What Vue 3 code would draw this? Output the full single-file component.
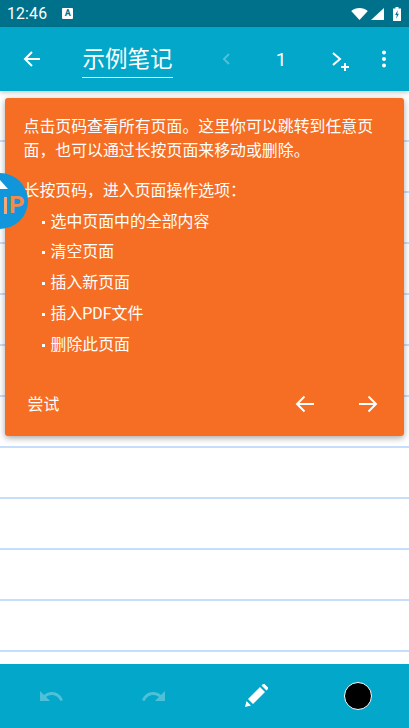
<script setup>
const steps = ["选中页面中的全部内容", "清空页面", "插入新页面", "插入PDF文件", "删除此页面"];
</script>

<template>
  <div class="screen">
    <div class="status">
      <span class="time">12:46</span>
      <span class="a-badge">A</span>
      <span class="spacer"></span>
      <svg class="wifi" width="17" height="12" viewBox="0 0 18 13"><path d="M0 3.200C2.500 1.100 5.500 0 9 0s6.500 1.100 9 3.200L9 13z" fill="#fff" /></svg>
      <svg class="signal" width="13" height="12" viewBox="0 0 13 12"><path d="M13 0v12H0z" fill="#fff" /></svg>
      <svg class="battery" width="8" height="14" viewBox="0 0 8 14"><path d="M2.500 0h3v1.500H8V14H0V1.500h2.500z" fill="#fff" /><path d="M4.700 3 2.200 8h1.600L3.200 12l2.600-5.200H4.200z" fill="#00718a" /></svg>
    </div>

    <div class="toolbar">
      <button class="icon-btn back">
        <svg width="20" height="20" viewBox="0 0 20 20"><path d="M18 10H3M10 3l-7 7 7 7" fill="none" stroke="#fff" stroke-width="2" /></svg>
      </button>
      <div class="title">示例笔记</div>
      <svg class="prev" width="10" height="14" viewBox="0 0 10 14"><path d="M8 2 3 7l5 5" fill="none" stroke="#fff" stroke-opacity=".3" stroke-width="2" /></svg>
      <span class="page-no">1</span>
      <svg class="next" width="20" height="22" viewBox="0 0 20 22"><path d="m1 2 7 6-7 6" fill="none" stroke="#fff" stroke-width="2" /><path d="M13 12v8M9 16h8" fill="none" stroke="#fff" stroke-width="2" /></svg>
      <svg class="more" width="6" height="18" viewBox="0 0 6 18"><circle cx="3" cy="2.500" r="2" fill="#fff" /><circle cx="3" cy="9" r="2" fill="#fff" /><circle cx="3" cy="15.500" r="2" fill="#fff" /></svg>
    </div>

    <div class="paper">
      <div class="card">
        <p class="intro">点击页码查看所有页面。这里你可以跳转到任意页面，也可以通过长按页面来移动或删除。</p>
        <p class="lead">长按页码，进入页面操作选项：</p>
        <ul class="steps">
          <li v-for="step in steps" :key="step">{{ step }}</li>
        </ul>
        <div class="card-foot">
          <span class="try">尝试</span>
          <span class="spacer"></span>
          <svg width="20" height="18" viewBox="0 0 20 18"><path d="M19 9H2M9.500 1.500 2 9l7.500 7.500" fill="none" stroke="#fff" stroke-width="2" /></svg>
          <svg class="fwd" width="20" height="18" viewBox="0 0 20 18"><path d="M1 9h17M10.500 1.500 18 9l-7.500 7.500" fill="none" stroke="#fff" stroke-width="2" /></svg>
        </div>
      </div>
      <div class="bubble">
        <svg class="roof" width="8" height="9" viewBox="0 0 8 9"><path d="M0 0 8 9H0z" fill="#fff" /></svg>
        <span class="o-stub"></span>
        <span class="bubble-text">P</span>
      </div>
    </div>

    <div class="bottom">
      <svg width="23" height="12" viewBox="2 7 20.500 9"><path d="M12.500 8c-2.650 0-5.050.99-6.900 2.600L2 7v9h9l-3.620-3.620c1.390-1.160 3.160-1.880 5.120-1.880 3.540 0 6.550 2.310 7.600 5.500l2.370-.78C21.080 11.030 17.150 8 12.500 8z" fill="#fff" fill-opacity=".3" /></svg>
      <svg width="23" height="12" viewBox="1.500 7 20.500 9"><path d="M18.400 10.600C16.550 8.990 14.150 8 11.500 8c-4.650 0-8.580 3.030-9.960 7.220L3.900 16c1.050-3.190 4.050-5.500 7.600-5.500 1.950 0 3.730.72 5.120 1.880L13 16h9V7l-3.600 3.600z" fill="#fff" fill-opacity=".3" /></svg>
      <svg width="24" height="24" viewBox="0 0 24 24"><path d="M1 23l1.500-6L7 21.500zM4 15 16 3l5 5L9 20zM17.500 1.500 19 0c.500-.500 1-.500 1.500 0l3.500 3.500c.500.500.500 1 0 1.500l-1.500 1.500z" fill="#fff" /></svg>
      <span class="swatch"></span>
    </div>
  </div>
</template>

<style scoped>
.screen {
  position: relative;
  width: 409px;
  height: 728px;
  display: flex;
  flex-direction: column;
  overflow: hidden;
  background: #fff;
  color: #fff;
  font-family: Roboto, "Noto Sans CJK SC", sans-serif;
}
.status {
  height: 27px;
  flex: none;
  display: flex;
  align-items: center;
  padding: 0 8px 0 7px;
  background: #00718a;
}
.time {
  font-size: 15.750px;
  letter-spacing: 0.2px;
}
.a-badge {
  width: 11px;
  height: 11px;
  margin-left: 15px;
  background: #fff;
  color: #00718a;
  border-radius: 1px;
  font-size: 9px;
  font-weight: 700;
  line-height: 11px;
  text-align: center;
}
.spacer {
  flex: 1;
}
.wifi {
  margin-top: 1px;
}
.signal {
  margin-left: 3px;
  margin-top: 1px;
}
.battery {
  margin-left: 9px;
}
.toolbar {
  height: 64px;
  flex: none;
  display: flex;
  align-items: center;
  background: #02a7c9;
  box-shadow: 0 2px 4px rgba(0, 0, 0, 0.2);
  position: relative;
  z-index: 2;
}
.icon-btn {
  padding: 0;
  border: 0;
  background: none;
  display: flex;
}
.back {
  margin-left: 22px;
}
.title {
  width: 91px;
  margin-left: 40px;
  margin-top: 4px;
  padding-bottom: 3px;
  border-bottom: 1px solid #fff;
  font-size: 22.500px;
  line-height: 30px;
  text-align: center;
  white-space: nowrap;
}
.prev {
  margin-left: 48px;
}
.page-no {
  width: 12px;
  margin-left: 44px;
  font-size: 19px;
  text-align: center;
}
.next {
  margin-left: 45px;
  margin-top: 6px;
}
.more {
  margin-left: 29px;
}
.paper {
  flex: 1;
  position: relative;
  background:
    repeating-linear-gradient(
      to bottom,
      #fff 0,
      #fff 49px,
      #c7defa 49px,
      #c7defa 51px
    );
  display: flex;
  flex-direction: column;
  padding: 7px 5px 0;
}
.card {
  box-sizing: border-box;
  height: 338px;
  padding: 17px 19px 0 18.500px;
  background: #f56e23;
  border-radius: 3px;
  box-shadow: 0 2px 6px rgba(0, 0, 0, 0.35);
  font-size: 15.900px;
  display: flex;
  flex-direction: column;
}
.intro {
  margin: 0;
  line-height: 23.500px;
}
.lead {
  margin: 17px 0 0;
  line-height: 24px;
}
.steps {
  margin: 3.500px 0 0;
  padding: 0;
  list-style: none;
}
.steps li {
  position: relative;
  height: 30.750px;
  padding-left: 27px;
  line-height: 30.750px;
}
.steps li::before {
  content: "";
  position: absolute;
  left: 18px;
  top: 14px;
  width: 3px;
  height: 3px;
  background: #fff;
}
.card-foot {
  margin-top: 32px;
  display: flex;
  align-items: center;
  padding-left: 4px;
  padding-right: 7px;
}
.fwd {
  margin-left: 43px;
}
.bubble {
  position: absolute;
  left: 0;
  top: 82px;
  width: 28px;
  height: 56px;
  border-radius: 0 28px 28px 0;
  background: #1296db;
  overflow: hidden;
}
.roof {
  position: absolute;
  left: 0;
  top: 7px;
}
.o-stub {
  position: absolute;
  left: 0;
  top: 24px;
  width: 4px;
  height: 17px;
  border-right: 3px solid #f5a878;
}
.bubble-text {
  position: absolute;
  left: 9px;
  top: 20px;
  font-size: 24px;
  font-weight: 700;
  line-height: 24px;
  color: #f58a4a;
}
.bottom {
  height: 64px;
  flex: none;
  display: grid;
  grid-template-columns: repeat(4, 1fr);
  justify-items: center;
  align-items: center;
  background: #02a7c9;
}
.swatch {
  width: 26px;
  height: 26px;
  border-radius: 50%;
  background: #000;
  border: 1px solid #fff;
}
</style>
